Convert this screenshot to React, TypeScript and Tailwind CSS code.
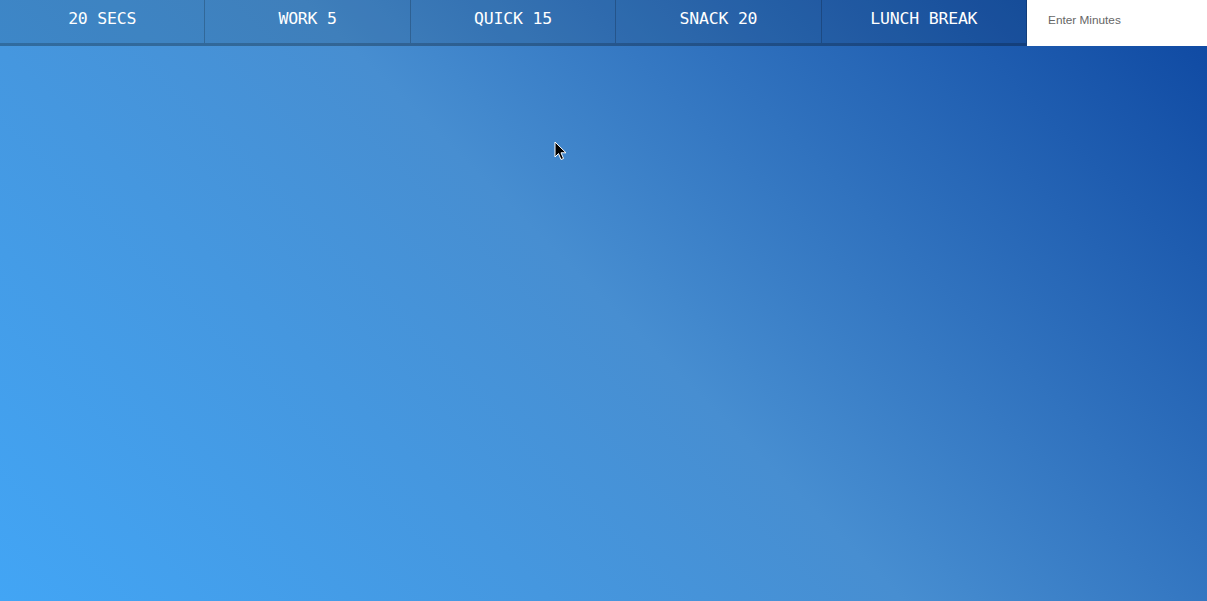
import React from "react";

const presets = ["20 Secs", "Work 5", "Quick 15", "Snack 20", "Lunch Break"];

const Cursor = () => (
  <svg
    className="absolute left-[554px] top-[141px]"
    width="13"
    height="20"
    viewBox="0 0 13 20"
  >
    <path
      d="M1 1 L1 16 L4.5 12.5 L7 18.5 L9.5 17.5 L7 11.8 L12 11.8 Z"
      fill="#000"
      stroke="#fff"
      strokeWidth="1"
      strokeLinejoin="round"
    />
  </svg>
);

const App = () => {
  return (
    <div className="relative min-h-[601px] w-full bg-[linear-gradient(45deg,#42a5f5_0%,#478ed1_50%,#0d47a1_100%)] font-['DejaVu_Sans_Mono',monospace]">
      <div className="flex h-[46px]">
        {presets.map((label) => (
          <button
            key={label}
            className="flex-1 bg-black/10 border-r border-r-black/20 border-b-[3px] border-b-black/20 text-white text-[16.5px] uppercase tracking-[-0.2px] pb-[4px] cursor-pointer"
          >
            {label}
          </button>
        ))}
        <form className="flex w-[180px]">
          <input
            type="text"
            name="minutes"
            placeholder="Enter Minutes"
            className="w-full bg-white border-0 pl-[21px] pb-[5px] text-[11.8px] font-['Liberation_Sans',Arial,sans-serif] text-gray-700 placeholder:text-[#666] outline-none"
          />
        </form>
      </div>
      <div className="flex flex-col items-center">
        <h1 className="text-white"></h1>
        <p className="text-white"></p>
      </div>
      <Cursor />
    </div>
  );
};

export default App;
